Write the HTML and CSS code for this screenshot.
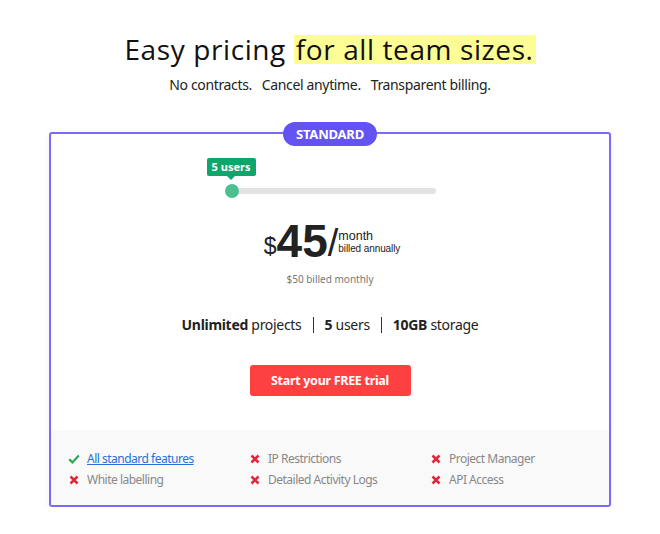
FILE: index.html
```html
<!DOCTYPE html>
<html>
<head>
<meta charset="utf-8">
<link rel="stylesheet" href="styles.css">
</head>
<body>
<div class="page">
  <h1 class="title">Easy pricing <span class="hl">for all team sizes.</span></h1>
  <p class="subtitle">No contracts.&nbsp;&nbsp; Cancel anytime.&nbsp;&nbsp; Transparent billing.</p>

  <div class="card">
    <div class="badge">STANDARD</div>
    <div class="main">
      <div class="slider">
        <div class="tip">5 users</div>
        <div class="track"><div class="thumb"></div></div>
      </div>
      <div class="price">
        <span class="cur">$</span><span class="amount">45</span><span class="slash">/</span>
        <span class="per"><span class="month">month</span><span class="annual">billed annually</span></span>
      </div>
      <div class="monthly">$50 billed monthly</div>
      <div class="specs">
        <span><b>Unlimited</b> projects</span><span class="sep"></span><span><b>5</b> users</span><span class="sep"></span><span><b>10GB</b> storage</span>
      </div>
      <button class="cta">Start your FREE trial</button>
    </div>
    <div class="features">
      <div class="feat"><svg class="ic" viewBox="0 0 12 12"><path d="M1.2 6.2 L4.4 9.4 L10.8 2.6" fill="none" stroke="#2ea84f" stroke-width="2.2"/></svg><a href="#">All standard features</a></div>
      <div class="feat"><svg class="ic" viewBox="0 0 12 12"><path d="M2.5 2.5 L9.5 9.5 M9.5 2.5 L2.5 9.5" stroke="#e0263a" stroke-width="2.5"/></svg>IP Restrictions</div>
      <div class="feat"><svg class="ic" viewBox="0 0 12 12"><path d="M2.5 2.5 L9.5 9.5 M9.5 2.5 L2.5 9.5" stroke="#e0263a" stroke-width="2.5"/></svg>Project Manager</div>
      <div class="feat"><svg class="ic" viewBox="0 0 12 12"><path d="M2.5 2.5 L9.5 9.5 M9.5 2.5 L2.5 9.5" stroke="#e0263a" stroke-width="2.5"/></svg>White labelling</div>
      <div class="feat"><svg class="ic" viewBox="0 0 12 12"><path d="M2.5 2.5 L9.5 9.5 M9.5 2.5 L2.5 9.5" stroke="#e0263a" stroke-width="2.5"/></svg>Detailed Activity Logs</div>
      <div class="feat"><svg class="ic" viewBox="0 0 12 12"><path d="M2.5 2.5 L9.5 9.5 M9.5 2.5 L2.5 9.5" stroke="#e0263a" stroke-width="2.5"/></svg>API Access</div>
    </div>
  </div>
</div>
</body>
</html>
```

FILE: styles.css
```css
* { box-sizing: border-box; }
html, body { margin: 0; padding: 0; background: #fff; }
body { font-family: "Noto Sans", "Open Sans", sans-serif; color: #222; }
.page { padding-top: 30px; display: flex; flex-direction: column; align-items: center; }
.title {
  margin: 0; font-family: "Open Sans", sans-serif; font-weight: 400;
  font-size: 28px; line-height: 38px; color: #111; letter-spacing: 0.6px;
}
.hl { display: inline-block; background: #fdfd96; padding: 0 2px; line-height: 29px; }
.subtitle { margin: 7px 0 0; font-size: 14px; line-height: 20px; color: #222; letter-spacing: -0.35px; }
.card {
  position: relative; margin-top: 37px; width: 562px;
  border: 2px solid #7b68ff; border-radius: 3px;
  box-shadow: 0 2px 8px rgba(0,0,0,0.06);
}
.badge {
  position: absolute; top: -12px; left: 50%; transform: translateX(-50%);
  background: #6353f5; color: #fff; font-weight: 700; font-size: 13px;
  height: 24px; line-height: 24px; padding: 0 13px; border-radius: 12px;
  letter-spacing: -0.2px;
}
.main { display: flex; flex-direction: column; align-items: center; padding-top: 24px; padding-bottom: 34px; }
.slider { position: relative; width: 204px; height: 42px; margin-left: 7px; }
.tip {
  position: absolute; left: -25px; top: 0; width: 49px; height: 18px;
  background: #10a56b; color: #fff; font-size: 11px; font-weight: 700;
  text-align: center; line-height: 18px; border-radius: 2px;
}
.tip::after {
  content: ""; position: absolute; left: 50%; bottom: -4px; margin-left: -4px;
  border-left: 4px solid transparent; border-right: 4px solid transparent; border-top: 4px solid #10a56b;
}
.track { position: absolute; left: 0; right: 0; top: 30px; height: 6px; background: #e3e3e3; border-radius: 3px; }
.thumb { position: absolute; left: -7px; top: -4px; width: 14px; height: 14px; border-radius: 50%; background: #4cbf90; }
.price { display: flex; align-items: flex-start; font-family: "Liberation Sans", Arial, sans-serif; color: #222; margin-top: 18px; margin-left: 4px; }
.cur { font-size: 23px; line-height: 23px; margin-top: 16.5px; margin-right: 0; }
.amount { font-size: 46px; font-weight: 700; line-height: 46px; }
.slash { font-size: 38px; line-height: 38px; margin-top: 5.7px; }
.per { display: flex; flex-direction: column; margin-left: 0; margin-top: 10.7px; }
.month { font-size: 12.5px; line-height: 14px; }
.annual { font-size: 10px; line-height: 11px; letter-spacing: -0.1px; }
.monthly { margin-top: 8px; font-size: 10px; color: #777; }
.specs { margin-top: 29px; display: flex; align-items: center; font-size: 14px; color: #222; letter-spacing: -0.3px; }
.specs b { font-weight: 700; }
.sep { width: 1px; height: 16px; background: #333; margin: 0 11px; }
.cta {
  margin-top: 31px; width: 161px; height: 31px; border: 0; border-radius: 3px;
  background: #ff4040; color: #fff; font-family: "Noto Sans", sans-serif; font-size: 12.5px; font-weight: 700;
  letter-spacing: -0.3px;
}
.features {
  background: #f9f9f9; display: grid; grid-template-columns: 181px 181px 181px;
  padding: 20px 0 16px 17px; row-gap: 3px; border-radius: 0 0 2px 2px;
}
.feat { display: flex; align-items: center; font-size: 12px; line-height: 18px; color: #888; letter-spacing: -0.5px; }
.ic { width: 12px; height: 12px; margin-right: 7px; }
.feat a { color: #2a6fdb; text-decoration: underline; }
```
